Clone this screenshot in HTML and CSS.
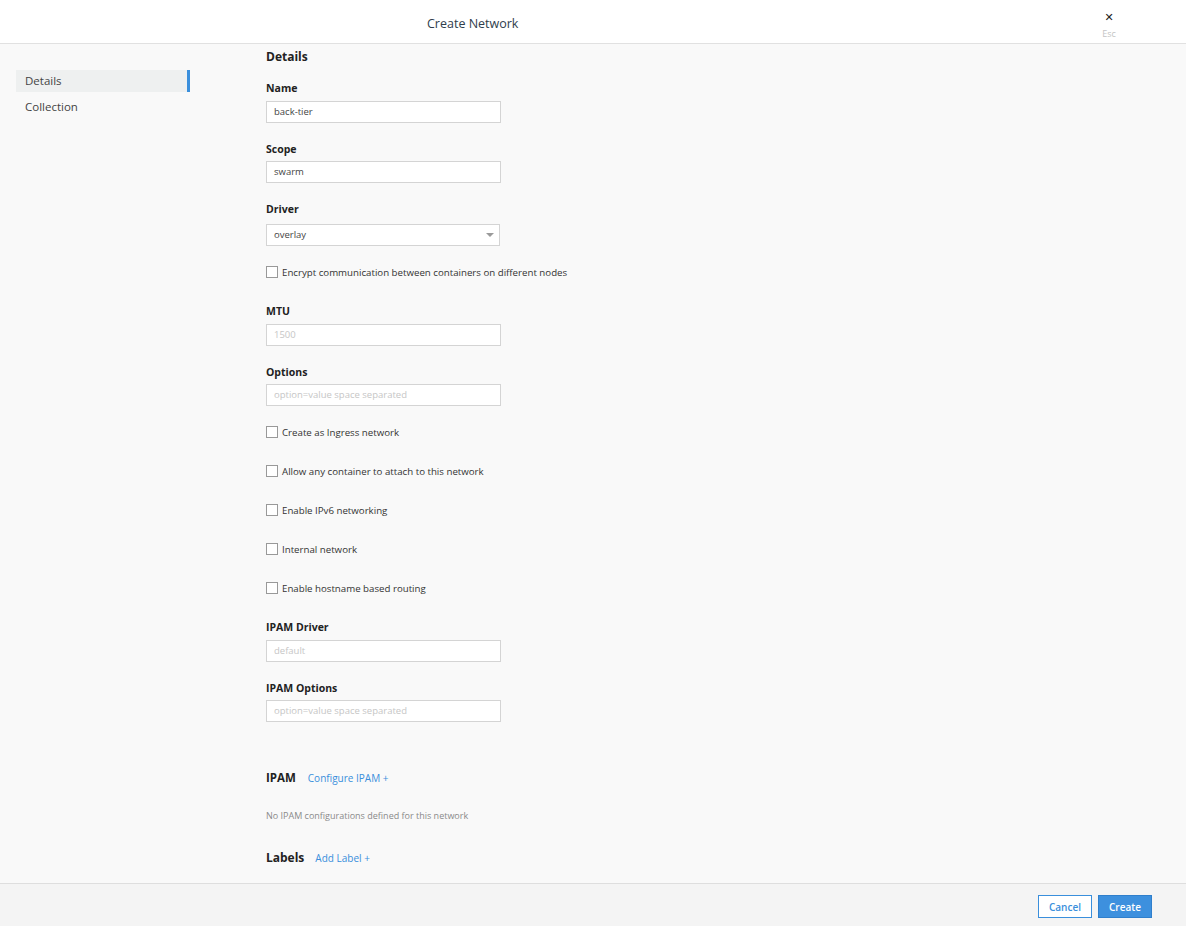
FILE: index.html
```html
<!DOCTYPE html>
<html>
<head>
<meta charset="utf-8">
<link rel="stylesheet" href="styles.css">
</head>
<body>
<div class="page">
  <header class="header">
    <div class="title">Create Network</div>
    <div class="close">
      <span class="close-x">&#x2715;</span>
      <span class="close-esc">Esc</span>
    </div>
  </header>
  <div class="body">
    <nav class="sidebar">
      <div class="nav-item active">Details</div>
      <div class="nav-item">Collection</div>
    </nav>
    <main class="main">
      <h2 class="section-title">Details</h2>
      <div class="field">
        <div class="label">Name</div>
        <div class="input">back-tier</div>
      </div>
      <div class="field">
        <div class="label">Scope</div>
        <div class="input">swarm</div>
      </div>
      <div class="field">
        <div class="label label-select">Driver</div>
        <div class="input select">overlay<span class="caret"></span></div>
      </div>
      <div class="check"><span class="box"></span>Encrypt communication between containers on different nodes</div>
      <div class="field">
        <div class="label">MTU</div>
        <div class="input placeholder">1500</div>
      </div>
      <div class="field">
        <div class="label">Options</div>
        <div class="input placeholder">option=value space separated</div>
      </div>
      <div class="check"><span class="box"></span>Create as Ingress network</div>
      <div class="check"><span class="box"></span>Allow any container to attach to this network</div>
      <div class="check"><span class="box"></span>Enable IPv6 networking</div>
      <div class="check"><span class="box"></span>Internal network</div>
      <div class="check"><span class="box"></span>Enable hostname based routing</div>
      <div class="field">
        <div class="label">IPAM Driver</div>
        <div class="input placeholder">default</div>
      </div>
      <div class="field">
        <div class="label">IPAM Options</div>
        <div class="input placeholder">option=value space separated</div>
      </div>
      <div class="sub-head ipam-head">
        <span class="sub-title">IPAM</span>
        <a class="link">Configure IPAM +</a>
      </div>
      <div class="empty">No IPAM configurations defined for this network</div>
      <div class="sub-head labels-head">
        <span class="sub-title">Labels</span>
        <a class="link">Add Label +</a>
      </div>
    </main>
  </div>
  <footer class="footer">
    <button class="btn btn-cancel">Cancel</button>
    <button class="btn btn-create">Create</button>
  </footer>
</div>
</body>
</html>
```
FILE: styles.css
```css
* { box-sizing: border-box; }
html, body { margin: 0; padding: 0; }
body {
  font-family: "Open Sans", "Liberation Sans", sans-serif;
  color: #333;
  background: #f9f9f9;
}
.page {
  height: 100vh;
  display: flex;
  flex-direction: column;
}
.header {
  height: 44px;
  flex: none;
  background: #fff;
  border-bottom: 1px solid #e1e1e1;
  display: flex;
  align-items: flex-start;
  justify-content: space-between;
  padding: 0 66px 0 427px;
}
.title {
  font-size: 12.5px;
  line-height: 18px;
  margin-top: 15px;
  color: #2f3d4c;
}
.close {
  display: flex;
  flex-direction: column;
  align-items: center;
  margin-top: 11px;
  width: 22px;
}
.close-x {
  font-size: 11px;
  line-height: 14px;
  color: #222;
  font-family: "DejaVu Sans", sans-serif;
}
.close-esc {
  font-size: 9px;
  line-height: 12px;
  color: #c4c4c4;
  margin-top: 3px;
}
.body {
  flex: 1;
  display: flex;
  overflow: hidden;
}
.sidebar {
  width: 190px;
  flex: none;
  padding: 26px 0 0 16px;
  display: flex;
  flex-direction: column;
  gap: 4px;
}
.nav-item {
  height: 22px;
  line-height: 22px;
  padding-left: 9px;
  font-size: 11.5px;
  color: #444;
}
.nav-item.active {
  background: #eef0f0;
  border-right: 3px solid #3a8fdc;
}
.main {
  margin-left: 76px;
  padding-top: 4px;
  flex: 1;
}
.section-title {
  margin: 0 0 14px;
  font-size: 12px;
  line-height: 18px;
  font-weight: 700;
  color: #222;
}
.field { margin-bottom: 18px; }
.label {
  font-size: 10.5px;
  font-weight: 700;
  line-height: 16px;
  height: 16px;
  color: #222;
  margin-bottom: 4.5px;
}
.label-select { margin-bottom: 7px; }
.input {
  width: 235px;
  height: 22px;
  border: 1px solid #d4d4d4;
  background: #fff;
  font-size: 9.5px;
  line-height: 20px;
  padding-left: 7px;
  color: #444;
}
.input.placeholder { color: #c6c6c6; }
.select {
  width: 234px;
  position: relative;
}
.caret {
  position: absolute;
  right: 5px;
  top: 8px;
  width: 0;
  height: 0;
  border-left: 4.5px solid transparent;
  border-right: 4.5px solid transparent;
  border-top: 4.5px solid #9a9a9a;
}
.check {
  display: flex;
  align-items: center;
  height: 16px;
  font-size: 9.7px;
  color: #333;
  margin-bottom: 23px;
}
.box {
  width: 12px;
  height: 12px;
  border: 1px solid #999;
  background: #fff;
  margin-right: 4px;
  flex: none;
}
.sub-head {
  display: flex;
  align-items: baseline;
  gap: 12px;
  height: 18px;
}
.ipam-head { margin-top: 48px; }
.sub-title {
  font-size: 11.5px;
  font-weight: 700;
  color: #222;
}
.labels-head .sub-title { font-size: 12px; }
.labels-head { gap: 11px; margin-top: 26px; }
.link {
  font-size: 10px;
  color: #3a8fdc;
  cursor: pointer;
}
.empty {
  font-size: 9px;
  color: #8a8a8a;
  margin-top: 21px;
  line-height: 14px;
}
.footer {
  height: 43px;
  flex: none;
  background: #f4f4f4;
  border-top: 1px solid #dedede;
  display: flex;
  justify-content: flex-end;
  align-items: flex-start;
  padding: 11px 34px 0 0;
  gap: 6px;
}
.btn {
  width: 54px;
  height: 23px;
  font-family: "Open Sans", "Liberation Sans", sans-serif;
  font-size: 10px;
  font-weight: 600;
  padding: 0;
  border-radius: 0;
  cursor: pointer;
}
.btn-cancel {
  background: #fff;
  border: 1px solid #3a8fdc;
  color: #3a8fdc;
}
.btn-create {
  background: #3d90de;
  border: 1px solid #2f7fcc;
  color: #fff;
}
```
